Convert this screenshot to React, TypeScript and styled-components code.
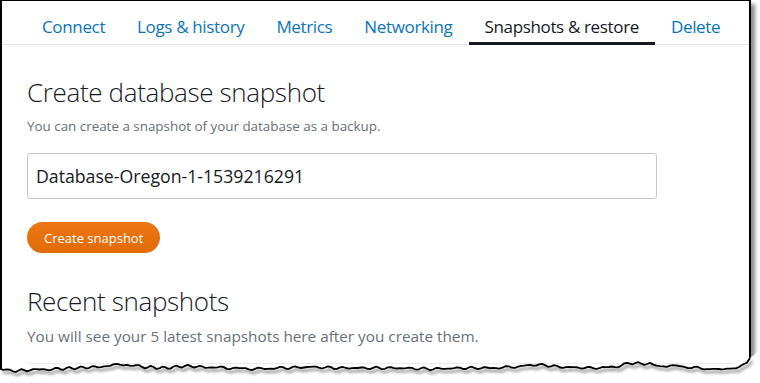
import styled, { createGlobalStyle } from "styled-components";

const GlobalStyle = createGlobalStyle`
  html, body {
    margin: 0;
    padding: 0;
    background: #ffffff;
  }
  body {
    font-family: "Open Sans", "Liberation Sans", sans-serif;
    -webkit-font-smoothing: antialiased;
  }
`;

const tabs = ["Connect", "Logs & history", "Metrics", "Networking", "Snapshots & restore", "Delete"];
const ACTIVE_TAB = "Snapshots & restore";

const Page = styled.div`
  position: relative;
  width: 760px;
  height: 383px;
  overflow: hidden;
`;

const Frame = styled.div`
  box-sizing: border-box;
  width: 751px;
  height: 376px;
  border-top: 1px solid #000;
  border-left: 2px solid #000;
  border-right: 2px solid #000;
  box-shadow: 4px 4px 4px rgba(0, 0, 0, 0.45);
  background: #ffffff;
  overflow: hidden;
`;

const TabBar = styled.nav`
  display: flex;
  height: 43px;
  padding-left: 24px;
  border-bottom: 1px solid #e6e8ea;
`;

const Tab = styled.a<{ active?: boolean }>`
  display: flex;
  align-items: center;
  padding: 9px 16px 0;
  font-size: 17px;
  letter-spacing: -0.35px;
  color: ${(p) => (p.active ? "#16191f" : "#0a74bb")};
  border-bottom: 3px solid ${(p) => (p.active ? "#16191f" : "transparent")};
  margin-bottom: -1px;
  text-decoration: none;
  white-space: nowrap;
  cursor: pointer;
`;

const Content = styled.section`
  padding: 0 14px 0 25px;
`;

const Heading = styled.h2<{ gap: number }>`
  margin: ${(p) => p.gap}px 0 0;
  font-size: 26px;
  letter-spacing: -0.35px;
  line-height: 34px;
  font-weight: 300;
  color: #16191f;
`;

const Hint = styled.p<{ size?: number; gap?: number }>`
  margin: ${(p) => p.gap ?? 7}px 0 0;
  font-size: ${(p) => p.size ?? 13.4}px;
  line-height: 18px;
  color: #687078;
`;

const NameInput = styled.div`
  box-sizing: border-box;
  display: flex;
  align-items: center;
  width: 630px;
  height: 46px;
  margin-top: 18px;
  padding: 0 8px;
  border: 1px solid #c6c6c6;
  border-radius: 3px;
  font-size: 17.7px;
  font-weight: 500;
  color: #16191f;
`;

const PrimaryButton = styled.button`
  box-sizing: border-box;
  height: 31px;
  margin-top: 23px;
  padding: 0 17px;
  border: none;
  border-radius: 16px;
  background: linear-gradient(#ee7614, #e06c08);
  color: #ffffff;
  font-family: inherit;
  font-size: 13px;
  font-weight: 500;
  cursor: pointer;
`;

const Divider = styled.hr`
  margin: 18px 0 0;
  border: none;
  border-top: 1px solid #e9ebed;
`;

const TornEdge = styled.svg`
  position: absolute;
  left: 0;
  top: 350px;
  width: 760px;
  height: 33px;
`;

// jagged bottom edge of the screenshot (page coords)
const anchors: [number, number][] = [
  [0, 369], [10, 371], [30, 370], [55, 369], [75, 368], [95, 367], [110, 366],
  [120, 364], [130, 365], [145, 367], [165, 368], [185, 366], [205, 367],
  [230, 368], [255, 369], [280, 368], [310, 367], [340, 368], [370, 368],
  [400, 368], [430, 369], [460, 368], [490, 368], [515, 367], [530, 365],
  [545, 365], [560, 367], [590, 368], [615, 367], [630, 363], [650, 364],
  [660, 367], [670, 365], [685, 367], [710, 369], [730, 369], [742, 366],
  [747, 362], [750, 358],
];

function edgePoints(): string {
  const pts: string[] = [];
  for (let i = 0; i < anchors.length - 1; i++) {
    const [x0, y0] = anchors[i];
    const [x1, y1] = anchors[i + 1];
    const steps = Math.max(1, Math.round((x1 - x0) / 3));
    for (let s = 0; s < steps; s++) {
      const x = x0 + ((x1 - x0) * s) / steps;
      const jitter = Math.sin(x * 1.7) * 0.8 + Math.sin(x * 0.53) * 0.6;
      const y = y0 + ((y1 - y0) * s) / steps + (i === 0 && s === 0 ? 0 : jitter);
      pts.push(`${x.toFixed(1)},${(y - 350).toFixed(1)}`);
    }
  }
  const [lx, ly] = anchors[anchors.length - 1];
  pts.push(`${lx},${ly - 350}`);
  return pts.join(" ");
}

export default function App() {
  const line = edgePoints();
  return (
    <>
      <GlobalStyle />
      <Page>
        <Frame>
          <TabBar>
            {tabs.map((t) => (
              <Tab key={t} active={t === ACTIVE_TAB}>
                {t}
              </Tab>
            ))}
          </TabBar>
          <Content>
            <Heading gap={30}>Create database snapshot</Heading>
            <Hint gap={8}>You can create a snapshot of your database as a backup.</Hint>
            <NameInput>Database-Oregon-1-1539216291</NameInput>
            <PrimaryButton>Create snapshot</PrimaryButton>
            <Heading gap={31}>Recent snapshots</Heading>
            <Hint size={15.3} gap={9}>
              You will see your 5 latest snapshots here after you create them.
            </Hint>
            <Divider />
          </Content>
        </Frame>
        <TornEdge viewBox="0 0 760 33">
          <defs>
            <filter id="edgeShadow" x="-5%" y="-50%" width="110%" height="300%">
              <feDropShadow dx="2" dy="3" stdDeviation="1.6" floodColor="#000" floodOpacity="0.55" />
            </filter>
          </defs>
          <polygon points={`${line} 760,0 760,33 0,33`} fill="#ffffff" />
          <polyline
            points={line}
            fill="none"
            stroke="#000"
            strokeWidth={1.8}
            strokeLinejoin="round"
            filter="url(#edgeShadow)"
          />
        </TornEdge>
      </Page>
    </>
  );
}
